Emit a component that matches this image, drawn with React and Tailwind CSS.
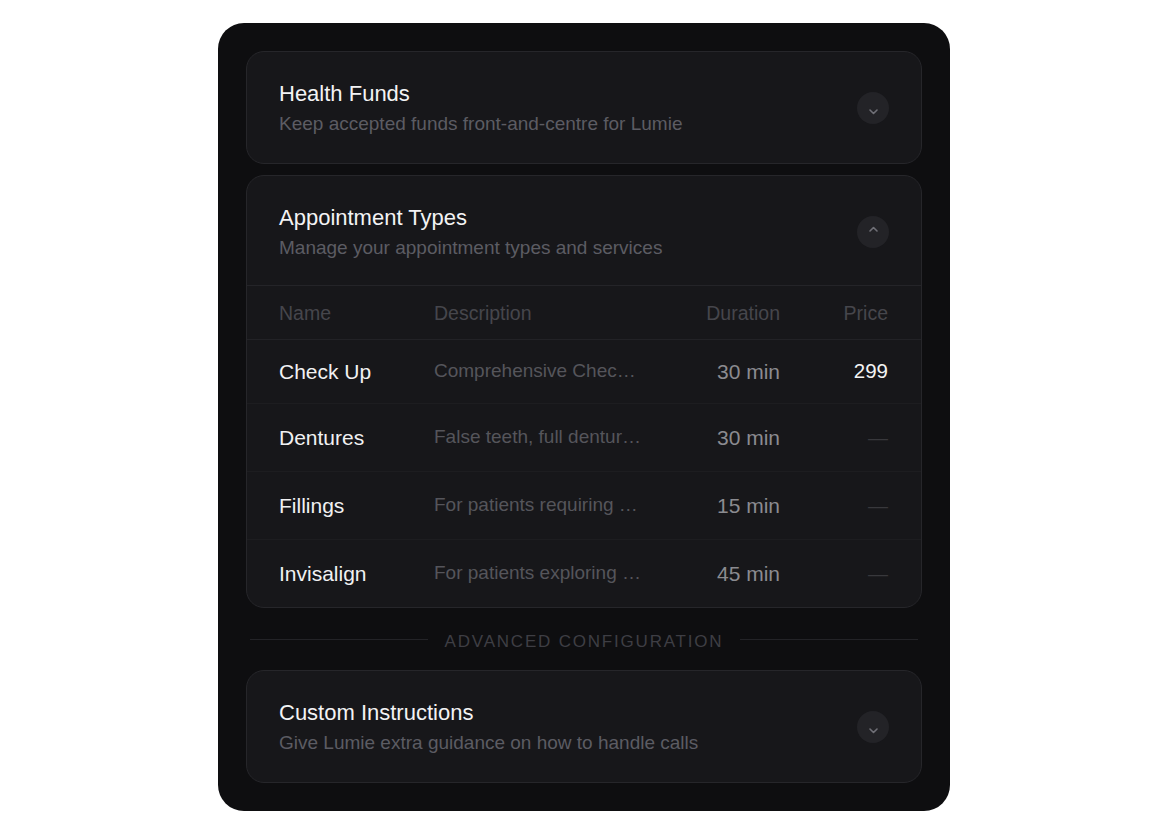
import React from "react"

const appointmentTypes = [
  { name: "Check Up", description: "Comprehensive Check Up and Clean", duration: "30 min", price: "299" },
  { name: "Dentures", description: "False teeth, full dentures and partials", duration: "30 min", price: null },
  { name: "Fillings", description: "For patients requiring a filling or repair", duration: "15 min", price: null },
  { name: "Invisalign", description: "For patients exploring clear aligners", duration: "45 min", price: null },
]

const Chevron = ({ up }) => (
  <span className="flex h-8 w-8 items-center justify-center rounded-full bg-[#232327]">
    <svg
      width="9"
      height="6"
      viewBox="0 0 9 6"
      fill="none"
      className={up ? "-mt-[7px]" : "mt-[8px]"}
    >
      <path
        d={up ? "M1 5L4.5 1.5L8 5" : "M1 1L4.5 4.5L8 1"}
        stroke="#707077"
        strokeWidth="1.6"
        strokeLinecap="round"
        strokeLinejoin="round"
      />
    </svg>
  </span>
)

const CardHeader = ({ title, subtitle, open }) => (
  <div className="flex items-center justify-between px-[32px] pt-[28px] pb-[27px]">
    <div className="flex flex-col gap-[4px]">
      <h3 className="text-[22px] leading-[28px] text-[#f3f3f4]">{title}</h3>
      <p className="text-[19px] leading-[24px] text-[#5c5c63]">{subtitle}</p>
    </div>
    <Chevron up={open} />
  </div>
)

export default function App() {
  return (
    <div
      className="flex min-h-screen items-start justify-center bg-white pt-[23px]"
      style={{ fontFamily: '"Liberation Sans", Arial, sans-serif' }}
    >
      <div className="flex w-[732px] flex-col rounded-[26px] bg-[#0e0e10] p-[28px]">
        <div className="rounded-[18px] border border-[#26262a] bg-[#17171a]">
          <CardHeader title="Health Funds" subtitle="Keep accepted funds front-and-centre for Lumie" />
        </div>

        <div className="mt-[11px] rounded-[18px] border border-[#26262a] bg-[#17171a]">
          <div className="h-[110px] border-b border-[#242428]">
            <CardHeader title="Appointment Types" subtitle="Manage your appointment types and services" open />
          </div>

          {/* table */}
          <div className="grid h-[54px] grid-cols-[155px_208px_1fr_108px] items-center border-b border-[#222226] pl-[32px] pr-[33px] pt-[3px] text-[19.5px] text-[#46464c]">
            <span>Name</span>
            <span>Description</span>
            <span className="text-right">Duration</span>
            <span className="text-right">Price</span>
          </div>
          {appointmentTypes.map((row, i) => {
            const last = i === appointmentTypes.length - 1
            return (
              <div
                key={row.name}
                className={`grid grid-cols-[155px_208px_1fr_108px] items-center pl-[32px] pr-[33px] ${
                  i === 0 ? "h-[64px]" : last ? "h-[67px]" : "h-[68px]"
                } ${last ? "" : "border-b border-[#1d1d20]"}`}
              >
                <span className="text-[21px] text-[#f1f1f2]">{row.name}</span>
                <span className="truncate text-[19px] text-[#55555b]">{row.description}</span>
                <span className="text-right text-[21px] text-[#8b8b90]">{row.duration}</span>
                {row.price ? (
                  <span className="text-right text-[20.5px] text-[#f3f3f4]">{row.price}</span>
                ) : (
                  <span className="text-right text-[20px] text-[#38383c]">—</span>
                )}
              </div>
            )
          })}
        </div>

        <div className="flex h-[62px] items-center gap-[17px] px-[4px]">
          <div className="h-px flex-1 bg-[#232327]" />
          <span className="mt-[5px] text-[17px] uppercase tracking-[1.8px] text-[#3e3e44]">Advanced Configuration</span>
          <div className="h-px flex-1 bg-[#232327]" />
        </div>

        <div className="rounded-[18px] border border-[#26262a] bg-[#17171a]">
          <CardHeader title="Custom Instructions" subtitle="Give Lumie extra guidance on how to handle calls" />
        </div>
      </div>
    </div>
  )
}
